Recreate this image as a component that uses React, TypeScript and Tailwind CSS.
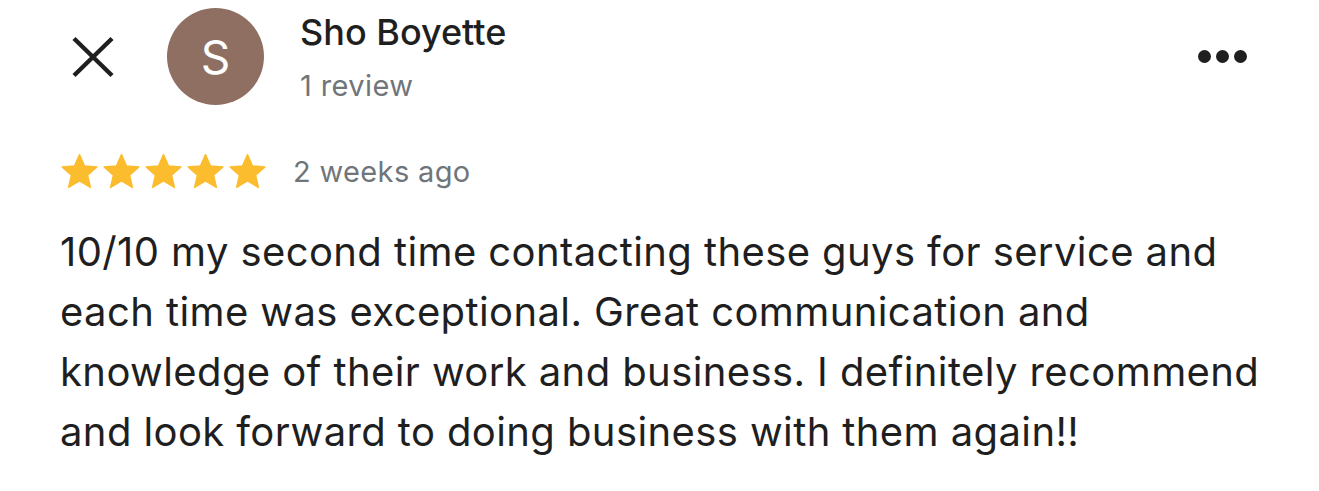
function Star() {
  return (
    <svg viewBox="0 0 24 24" className="h-[43px] w-[43px] -mx-[0.5px]" fill="#fbbc2e" stroke="#fbbc2e" strokeWidth={0.8} strokeLinejoin="round">
      <path d="M12 2.6l2.8 6.3 6.9.6-5.2 4.6 1.6 6.8-6.1-3.6-6.1 3.6 1.6-6.8-5.2-4.6 6.9-.6z" />
    </svg>
  );
}

export default function App() {
  return (
    <div className="w-[1319px] h-[491px] bg-white font-['Inter',sans-serif] text-[#1f1f1f] overflow-hidden">
      <div className="flex items-start pl-[71px] pr-[72px] pt-[8px]">
        <svg viewBox="0 0 44 42" className="mt-[28px] w-[44px] h-[42px]" stroke="#1f1f1f" strokeWidth={4.4}>
          <path d="M3 2.5l38 37M41 2.5l-38 37" />
        </svg>
        <div className="ml-[52px] w-[97px] h-[97px] rounded-full bg-[#8e6f62] flex items-center justify-center text-white text-[46px] leading-none">
          S
        </div>
        <div className="ml-[36px] flex flex-col">
          <div className="text-[36px] leading-[48px] font-medium">Sho Boyette</div>
          <div className="text-[29px] leading-[40px] tracking-[0.4px] text-[#70757a] mt-[10px]">1 review</div>
        </div>
        <div className="ml-auto flex gap-[5px] mt-[42px]">
          <span className="w-[13px] h-[13px] rounded-full bg-[#1f1f1f]" />
          <span className="w-[13px] h-[13px] rounded-full bg-[#1f1f1f]" />
          <span className="w-[13px] h-[13px] rounded-full bg-[#1f1f1f]" />
        </div>
      </div>
      <div className="flex items-center pl-[58px] mt-[44px]">
        <div className="flex">
          <Star />
          <Star />
          <Star />
          <Star />
          <Star />
        </div>
        <span className="ml-[25px] text-[29px] tracking-[0.35px] text-[#70757a]">2 weeks ago</span>
      </div>
      <p className="pl-[60px] pr-[40px] mt-[28px] text-[40px] leading-[60px] tracking-[0.4px] text-[#1f1f1f]">
        10/10 my second time contacting these guys for service and each time was exceptional. Great communication and knowledge of their work and business. I definitely recommend and look forward to doing business with them again!!
      </p>
    </div>
  );
}
